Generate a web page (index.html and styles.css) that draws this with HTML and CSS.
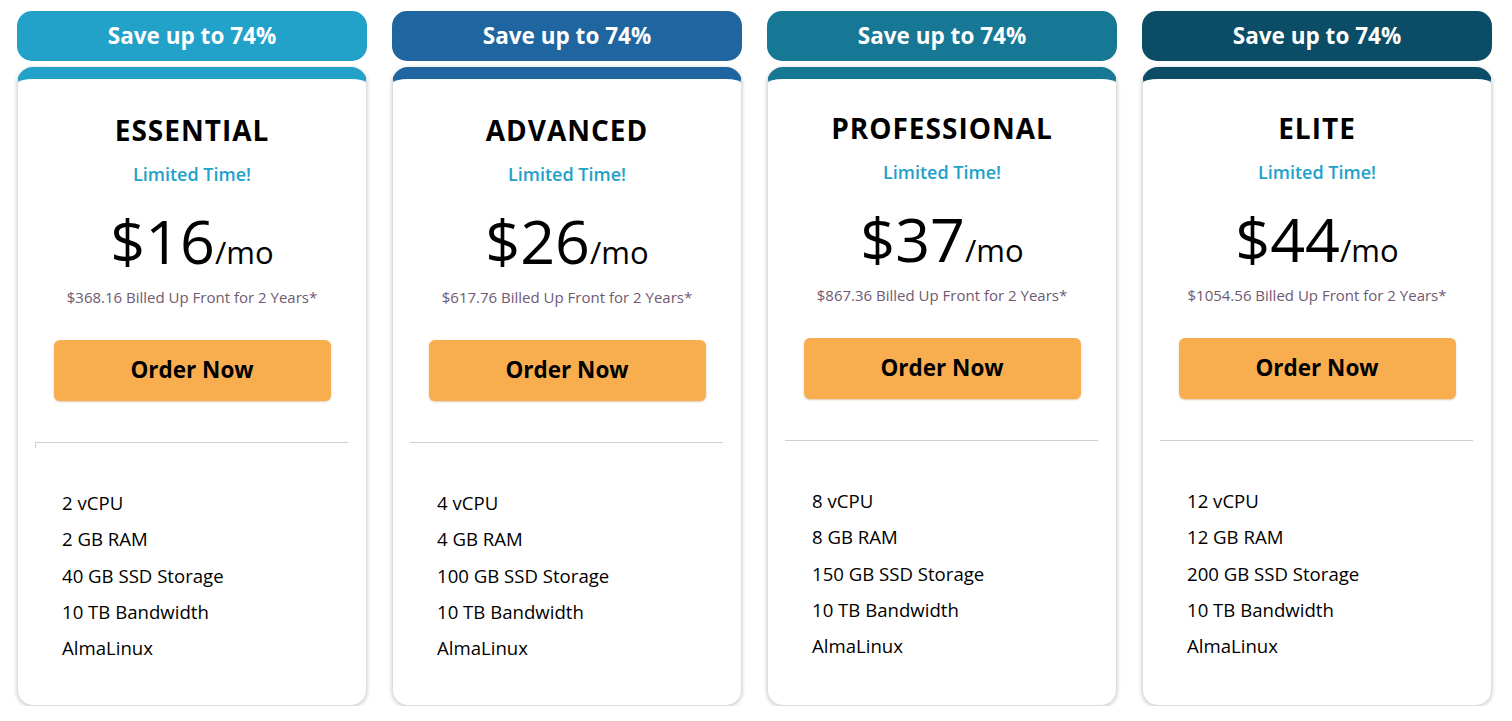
FILE: index.html
```html
<!DOCTYPE html>
<html>
<head>
<meta charset="utf-8">
<link rel="stylesheet" href="styles.css">
</head>
<body>
<div class="plans">
  <div class="plan plan-1">
    <div class="save">Save up to 74%</div>
    <div class="card">
      <h2 class="name">ESSENTIAL</h2>
      <div class="limited">Limited Time!</div>
      <div class="price"><span class="amount">$16</span><span class="per">/mo</span></div>
      <div class="billed">$368.16 Billed Up Front for 2 Years*</div>
      <a class="order">Order Now</a>
      <div class="divider divider-tick"></div>
      <ul class="features">
        <li>2 vCPU</li>
        <li>2 GB RAM</li>
        <li>40 GB SSD Storage</li>
        <li>10 TB Bandwidth</li>
        <li>AlmaLinux</li>
      </ul>
    </div>
  </div>
  <div class="plan plan-2">
    <div class="save">Save up to 74%</div>
    <div class="card">
      <h2 class="name">ADVANCED</h2>
      <div class="limited">Limited Time!</div>
      <div class="price"><span class="amount">$26</span><span class="per">/mo</span></div>
      <div class="billed">$617.76 Billed Up Front for 2 Years*</div>
      <a class="order">Order Now</a>
      <div class="divider"></div>
      <ul class="features">
        <li>4 vCPU</li>
        <li>4 GB RAM</li>
        <li>100 GB SSD Storage</li>
        <li>10 TB Bandwidth</li>
        <li>AlmaLinux</li>
      </ul>
    </div>
  </div>
  <div class="plan plan-3 shifted">
    <div class="save">Save up to 74%</div>
    <div class="card">
      <h2 class="name">PROFESSIONAL</h2>
      <div class="limited">Limited Time!</div>
      <div class="price"><span class="amount">$37</span><span class="per">/mo</span></div>
      <div class="billed">$867.36 Billed Up Front for 2 Years*</div>
      <a class="order">Order Now</a>
      <div class="divider"></div>
      <ul class="features">
        <li>8 vCPU</li>
        <li>8 GB RAM</li>
        <li>150 GB SSD Storage</li>
        <li>10 TB Bandwidth</li>
        <li>AlmaLinux</li>
      </ul>
    </div>
  </div>
  <div class="plan plan-4 shifted">
    <div class="save">Save up to 74%</div>
    <div class="card">
      <h2 class="name">ELITE</h2>
      <div class="limited">Limited Time!</div>
      <div class="price"><span class="amount">$44</span><span class="per">/mo</span></div>
      <div class="billed">$1054.56 Billed Up Front for 2 Years*</div>
      <a class="order">Order Now</a>
      <div class="divider"></div>
      <ul class="features">
        <li>12 vCPU</li>
        <li>12 GB RAM</li>
        <li>200 GB SSD Storage</li>
        <li>10 TB Bandwidth</li>
        <li>AlmaLinux</li>
      </ul>
    </div>
  </div>
</div>
</body>
</html>
```
FILE: styles.css
```css
* { box-sizing: border-box; }
html, body { margin: 0; padding: 0; background: #fff; }
body {
  font-family: "Open Sans", "Noto Sans", sans-serif;
  color: #000;
}
.plans {
  display: flex;
  gap: 25px;
  padding: 11px 0 0 17px;
}
.plan {
  width: 350px;
  display: flex;
  flex-direction: column;
  gap: 6px;
}
.plan-1 { --c: #22a1c9; }
.plan-2 { --c: #1f66a0; }
.plan-3 { --c: #177895; }
.plan-4 { --c: #0b4c66; }
.save {
  height: 50px;
  background: var(--c);
  border-radius: 15px;
  color: #fff;
  font-weight: 700;
  font-size: 22.5px;
  line-height: 50px;
  text-align: center;
}
.card {
  height: 639px;
  background: #fff;
  border: 1px solid #dedede;
  border-top: 12px solid var(--c);
  border-radius: 16px;
  box-shadow: 0 1px 4px rgba(0,0,0,0.22);
  display: flex;
  flex-direction: column;
  align-items: center;
  padding-top: 33px;
}
.shifted .card { padding-top: 31px; }
.name {
  margin: 0;
  font-size: 28px;
  font-weight: 700;
  letter-spacing: 1px;
  line-height: 36px;
}
.limited {
  margin-top: 14px;
  color: #22a1c9;
  font-weight: 600;
  font-size: 18px;
  line-height: 24px;
}
.price {
  margin-top: 25px;
  line-height: 60px;
  white-space: nowrap;
}
.amount { font-size: 61px; }
.per { font-size: 31px; }
.billed {
  margin-top: -1px;
  font-size: 15px;
  line-height: 20px;
  color: #6f5a72;
}
.order {
  margin-top: 33px;
  width: 277px;
  height: 61px;
  background: #f8ae4f;
  border-radius: 6px;
  box-shadow: 0 1px 2px rgba(160,100,20,0.35);
  font-weight: 700;
  font-size: 22.5px;
  line-height: 60px;
  text-align: center;
  color: #000;
}
.divider {
  margin-top: 41px;
  width: 313px;
  height: 6px;
  border-top: 1px solid #cfcfcf;
  align-self: flex-start;
  margin-left: 17px;
}
.divider-tick { border-left: 1px solid #cfcfcf; }
.features {
  align-self: stretch;
  list-style: none;
  margin: 37px 0 0;
  padding: 0 0 0 44px;
}
.features li {
  font-size: 18.6px;
  line-height: 36.25px;
}
```
